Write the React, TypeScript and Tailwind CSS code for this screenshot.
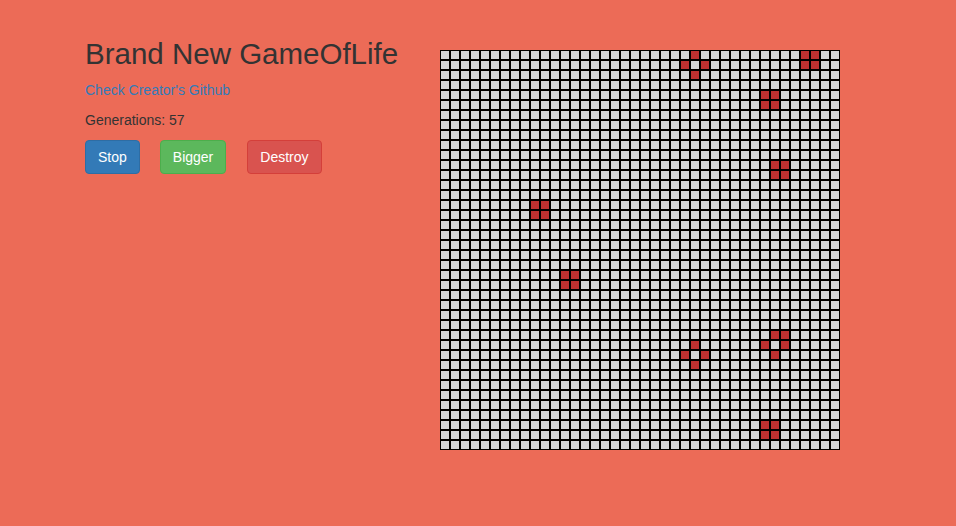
import React from "react";

const SIZE = 40;

// live cells at generation 57, [row, col]
const alive: [number, number][] = [
  [0, 25], [1, 24], [1, 26], [2, 25],
  [0, 36], [0, 37], [1, 36], [1, 37],
  [4, 32], [4, 33], [5, 32], [5, 33],
  [11, 33], [11, 34], [12, 33], [12, 34],
  [15, 9], [15, 10], [16, 9], [16, 10],
  [22, 12], [22, 13], [23, 12], [23, 13],
  [28, 33], [28, 34], [29, 32], [29, 34], [30, 33],
  [29, 25], [30, 24], [30, 26], [31, 25],
  [37, 32], [37, 33], [38, 32], [38, 33],
];

const liveSet = new Set(alive.map(([r, c]) => r * SIZE + c));

function Board() {
  const cells = [];
  for (let i = 0; i < SIZE * SIZE; i++) {
    const on = liveSet.has(i);
    cells.push(
      <div
        key={i}
        className={
          on
            ? "w-[10px] h-[10px] border border-black bg-[#bd3131]"
            : "w-[10px] h-[10px] border border-black bg-[#d3d6d9]"
        }
      />
    );
  }
  return (
    <div className="grid grid-cols-[repeat(40,10px)] w-[400px] h-[400px]">
      {cells}
    </div>
  );
}

export default function App() {
  return (
    <div
      className="min-h-[526px] w-full bg-[#ec6b57] text-[#333] text-sm leading-[20px]"
      style={{ fontFamily: '"Liberation Sans", Arial, sans-serif' }}
    >
      <div className="flex pl-[85px]">
        <div className="w-[355px] pt-[37px]">
          <h2 className="text-[29.5px] leading-[33px] mb-[10px]">
            Brand New GameOfLife
          </h2>
          <p className="mb-[10px]">
            <a href="#" className="text-[#337ab7]">
              Check Creator's Github
            </a>
          </p>
          <p className="mb-[10px]">Generations: 57</p>
          <div className="flex">
            <button className="h-[34px] px-[12px] rounded-[4px] border border-[#2e6da4] bg-[#337ab7] text-white">
              Stop
            </button>
            <button className="ml-[20px] h-[34px] px-[12px] rounded-[4px] border border-[#4cae4c] bg-[#5cb85c] text-white">
              Bigger
            </button>
            <button className="ml-[21px] h-[34px] px-[12px] rounded-[4px] border border-[#d43f3a] bg-[#d9534f] text-white">
              Destroy
            </button>
          </div>
        </div>
        <div className="pt-[50px]">
          <Board />
        </div>
      </div>
    </div>
  );
}
